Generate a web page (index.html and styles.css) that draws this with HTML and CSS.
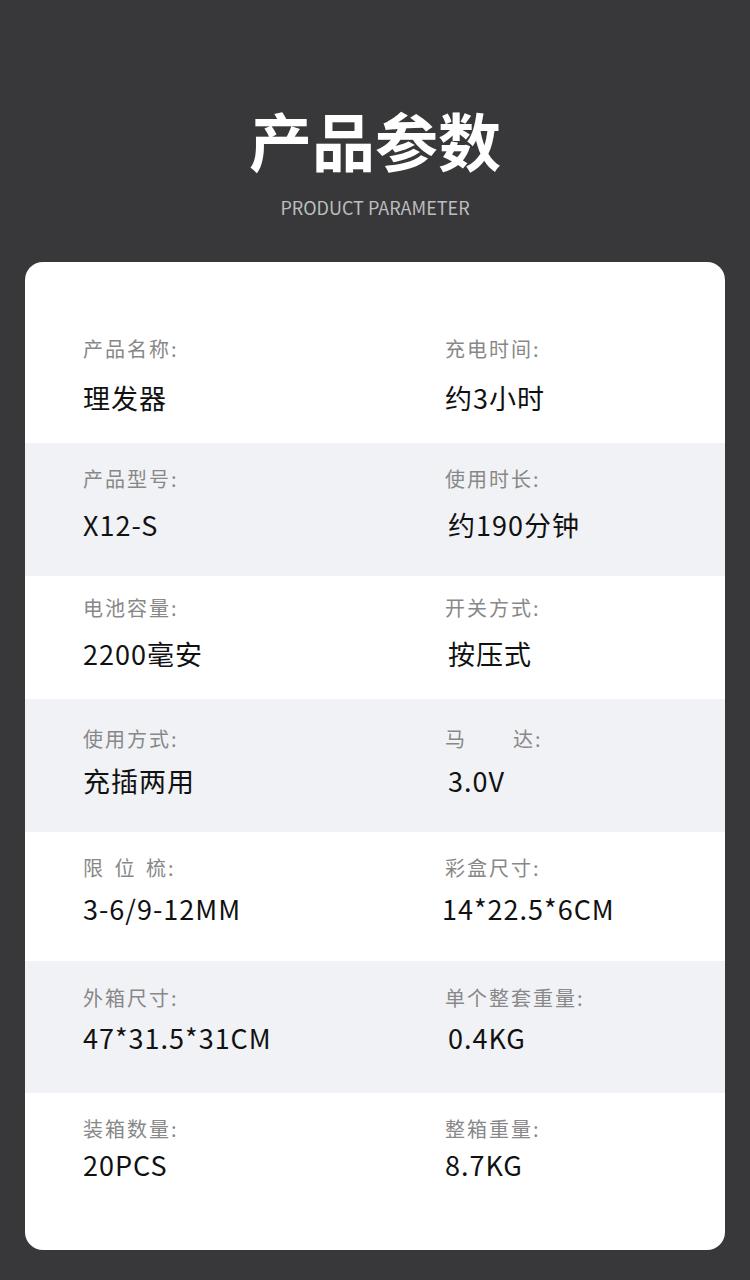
FILE: index.html
```html
<!DOCTYPE html>
<html lang="zh-CN">
<head>
<meta charset="utf-8">
<title>产品参数</title>
<link rel="stylesheet" href="styles.css">
</head>
<body>
<div class="page">
  <header class="head">
    <h1 class="title">产品参数</h1>
    <p class="subtitle">PRODUCT PARAMETER</p>
  </header>
  <section class="card">
    <div class="row r1">
      <div class="cell"><span class="label">产品名称:</span><span class="value">理发器</span></div>
      <div class="cell"><span class="label">充电时间:</span><span class="value">约3小时</span></div>
    </div>
    <div class="row r2 alt">
      <div class="cell"><span class="label">产品型号:</span><span class="value">X12-S</span></div>
      <div class="cell"><span class="label">使用时长:</span><span class="value nudge-r">约190分钟</span></div>
    </div>
    <div class="row r3">
      <div class="cell"><span class="label">电池容量:</span><span class="value">2200毫安</span></div>
      <div class="cell"><span class="label">开关方式:</span><span class="value nudge-r">按压式</span></div>
    </div>
    <div class="row r4 alt">
      <div class="cell"><span class="label">使用方式:</span><span class="value">充插两用</span></div>
      <div class="cell"><span class="label"><span class="gap">马</span>达:</span><span class="value nudge-r">3.0V</span></div>
    </div>
    <div class="row r5">
      <div class="cell"><span class="label spaced">限 位 梳:</span><span class="value">3-6/9-12MM</span></div>
      <div class="cell"><span class="label">彩盒尺寸:</span><span class="value nudge-l">14*22.5*6CM</span></div>
    </div>
    <div class="row r6 alt">
      <div class="cell"><span class="label">外箱尺寸:</span><span class="value">47*31.5*31CM</span></div>
      <div class="cell"><span class="label">单个整套重量:</span><span class="value nudge-r">0.4KG</span></div>
    </div>
    <div class="row r7">
      <div class="cell"><span class="label">装箱数量:</span><span class="value">20PCS</span></div>
      <div class="cell"><span class="label">整箱重量:</span><span class="value">8.7KG</span></div>
    </div>
  </section>
</div>
</body>
</html>
```

FILE: styles.css
```css
html, body {
  margin: 0;
  padding: 0;
}
body {
  background: #38383a;
  font-family: "Noto Sans CJK SC", "Noto Sans", sans-serif;
}
.page {
  width: 750px;
  height: 1280px;
  overflow: hidden;
}
.head {
  padding-top: 99px;
  text-align: center;
}
.title {
  margin: 0;
  font-size: 63px;
  line-height: 80px;
  font-weight: 700;
  color: #ffffff;
}
.subtitle {
  margin: 16px 0 0;
  font-size: 18px;
  line-height: 24px;
  color: #bdbdbd;
}
.card {
  margin: 43px 25px 0;
  background: #ffffff;
  border-radius: 18px;
  overflow: hidden;
}
.row {
  display: grid;
  grid-template-columns: 362px 1fr;
  padding-left: 58px;
}
.row.alt {
  background: #f1f2f6;
}
.cell {
  display: flex;
  flex-direction: column;
  align-items: flex-start;
}
.label {
  font-size: 20px;
  line-height: 24px;
  letter-spacing: 2px;
  color: #888888;
}
.label.spaced {
  word-spacing: 3px;
}
.gap {
  margin-right: 46px;
}
.value {
  font-size: 27px;
  line-height: 34px;
  letter-spacing: 1px;
  color: #111111;
}
.value.nudge-r { margin-left: 3px; }
.value.nudge-l { margin-left: -3px; }
.r1 { padding-top: 75px; padding-bottom: 28px; }
.r1 .value { margin-top: 20px; }
.r2 { padding-top: 24px; padding-bottom: 34px; }
.r2 .value { margin-top: 17px; }
.r3 { padding-top: 20px; padding-bottom: 28px; }
.r3 .value { margin-top: 17px; }
.r4 { padding-top: 28px; padding-bottom: 34px; }
.r4 .value { margin-top: 13px; }
.r5 { padding-top: 24px; padding-bottom: 35px; }
.r5 .value { margin-top: 12px; }
.r6 { padding-top: 25px; padding-bottom: 38px; }
.r6 .value { margin-top: 11px; }
.r7 { padding-top: 24px; padding-bottom: 68px; }
.r7 .value { margin-top: 7px; }
```
